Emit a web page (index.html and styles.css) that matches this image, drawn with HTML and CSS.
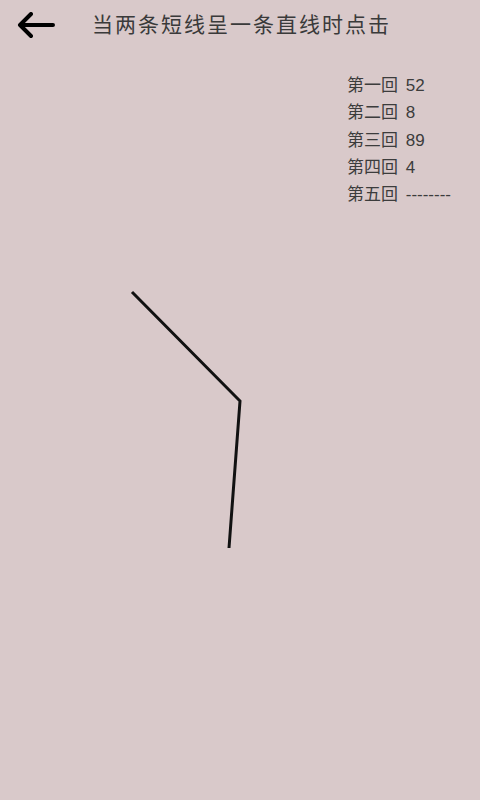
FILE: index.html
```html
<!DOCTYPE html>
<html>
<head>
  <title>直线</title>
  <link rel="stylesheet" href="styles.css">
</head>
<body>
  <div class="screen">
    <div class="header">
      <svg class="back" width="40" height="30" viewBox="0 0 40 30">
        <path d="M37 13 H5 M15 2 L4 13 L15 24" fill="none" stroke="#000" stroke-width="4" stroke-linecap="round" stroke-linejoin="round"/>
      </svg>
      <div class="title">当两条短线呈一条直线时点击</div>
    </div>
    <div class="stage">
      <svg class="canvas" width="480" height="752" viewBox="0 48 480 752">
        <polyline points="132,292 240,401 229,548" fill="none" stroke="#111" stroke-width="3" stroke-linejoin="miter"/>
      </svg>
      <ul class="scores">
        <li>第一回 52</li>
        <li>第二回 8</li>
        <li>第三回 89</li>
        <li>第四回 4</li>
        <li>第五回 --------</li>
      </ul>
    </div>
  </div>
</body>
</html>
```

FILE: styles.css
```css
body {
  margin: 0;
  font-family: "Noto Sans CJK SC", "Liberation Sans", sans-serif;
  background-color: #d9c9ca;
}

.screen {
  width: 480px;
  height: 800px;
  overflow: hidden;
}

.header {
  display: flex;
  align-items: center;
  height: 48px;
  padding-left: 16px;
}

.back {
  margin-top: 5px;
}

.title {
  margin-left: 36px;
  font-size: 21px;
  letter-spacing: 2px;
  color: #3a3a3a;
  margin-top: -2px;
}

.stage {
  position: relative;
  height: 752px;
}

.canvas {
  position: absolute;
  left: 0;
  top: 0;
}

.scores {
  position: relative;
  list-style: none;
  margin: 0;
  padding: 24px 0 0 347px;
  font-family: "Liberation Sans", "Noto Sans CJK SC", sans-serif;
  word-spacing: 3px;
}

.scores li {
  font-size: 17px;
  line-height: 27.3px;
  color: #3c3c3c;
}
```
